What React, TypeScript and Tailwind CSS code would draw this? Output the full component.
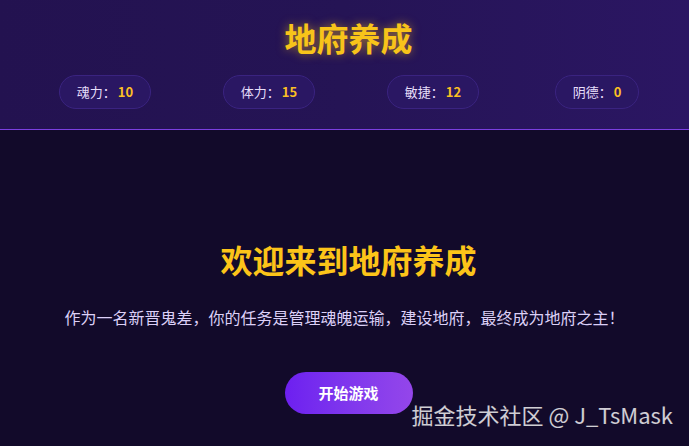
const stats = [
  { label: '魂力', value: 10 },
  { label: '体力', value: 15 },
  { label: '敏捷', value: 12 },
  { label: '阴德', value: 0 },
];

function StatPill({ label, value }: { label: string; value: number }) {
  return (
    <div className="flex h-[34px] items-center rounded-full border border-[#3a2380] bg-[#2a1763] px-[17px] text-[13px]">
      <span className="text-[#e6defa]">{label}：</span>
      <span className="ml-[2px] font-bold text-[#fbbf24]">{value}</span>
    </div>
  );
}

export default function App() {
  return (
    <div className="relative flex h-[446px] w-full flex-col overflow-hidden bg-[#120a2a] font-['Noto_Sans_CJK_SC','Noto_Sans',sans-serif]">
      {/* Header with title and stats */}
      <header className="border-b border-[#7b3fe0] bg-gradient-to-r from-[#231250] via-[#251455] to-[#2b1663] pt-[18px] pb-[20px]">
        <h1 className="ml-[8px] text-center text-[32px] font-bold leading-[38px] text-[#f8c41a] [text-shadow:0_0_10px_rgba(250,190,20,0.55)]">
          地府养成
        </h1>
        <div className="mt-[19px] grid grid-cols-4 justify-items-center pl-[23px] pr-[10px]">
          {stats.map((s) => (
            <StatPill key={s.label} label={s.label} value={s.value} />
          ))}
        </div>
      </header>

      {/* Welcome screen */}
      <main className="flex flex-1 flex-col items-center pt-[109px]">
        <h2 className="ml-[8px] text-[32px] font-bold leading-[40px] text-[#fcc419]">欢迎来到地府养成</h2>
        <p className="mt-[26px] text-[16px] leading-[24px] text-[#dcd0f7]">
          作为一名新晋鬼差，你的任务是管理魂魄运输，建设地府，最终成为地府之主！
        </p>
        <button className="mt-[43px] ml-[8px] h-[42px] w-[128px] rounded-full bg-gradient-to-r from-[#6d1ff0] to-[#9446ea] text-[15px] font-bold text-white">
          开始游戏
        </button>
      </main>

      <div className="absolute right-[16px] bottom-[19px] text-[22px] leading-[26px] text-white/80">
        掘金技术社区 @ J_TsMask
      </div>
    </div>
  );
}
